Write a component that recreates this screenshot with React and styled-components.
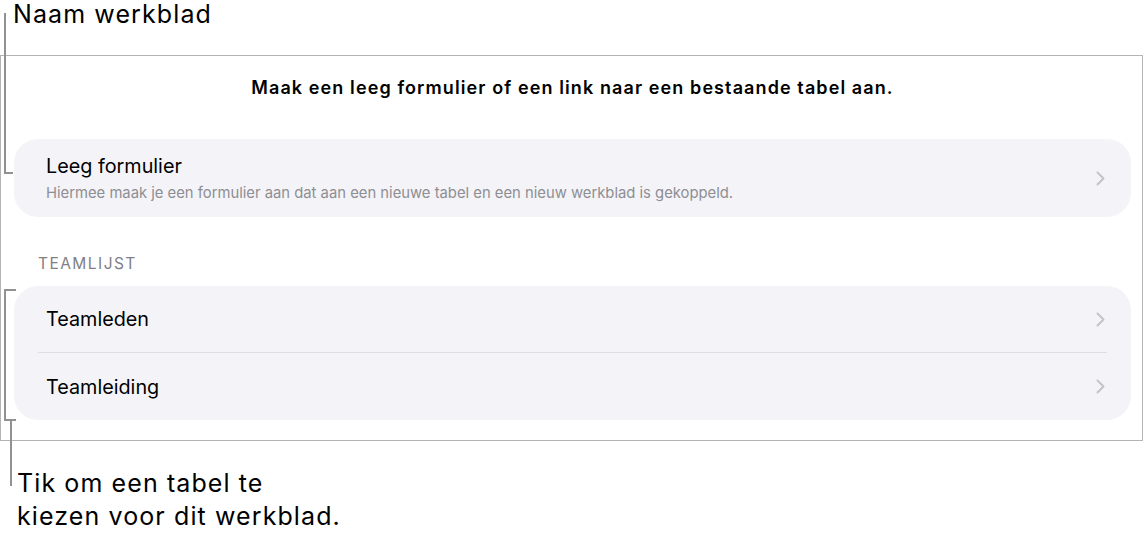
import React from 'react';
import styled, { createGlobalStyle } from 'styled-components';

const GlobalStyle = createGlobalStyle`
  html, body {
    margin: 0;
    padding: 0;
    background: #ffffff;
  }
  body {
    font-family: Inter, "Noto Sans", "Liberation Sans", sans-serif;
    color: #000000;
    -webkit-font-smoothing: antialiased;
  }
`;

const Page = styled.div`
  position: relative;
  width: 1144px;
  height: 537px;
  overflow: hidden;
`;

const CalloutText = styled.div`
  font-size: 25px;
  line-height: ${(p) => p.$lh}px;
  letter-spacing: 1.1px;
  color: #000;
  padding-left: ${(p) => p.$indent}px;
  padding-top: ${(p) => p.$top}px;
  height: ${(p) => p.$height}px;
  box-sizing: border-box;
`;

const Frame = styled.section`
  box-sizing: border-box;
  width: 1143px;
  border: 1px solid #b4b4b4;
  padding: 0 11px 20px 13px;
`;

const Heading = styled.h1`
  margin: 0;
  height: 83px;
  padding-top: 21px;
  box-sizing: border-box;
  text-align: center;
  font-size: 18px;
  line-height: 22px;
  font-weight: 600;
  letter-spacing: 1.1px;
`;

const Card = styled.div`
  background: #f4f4f8;
  border-radius: 24px;
  overflow: hidden;
`;

const Row = styled.div`
  display: flex;
  align-items: center;
  height: ${(p) => p.$height}px;
  padding: 0 26px 0 32px;
  box-sizing: border-box;
`;

const RowText = styled.div`
  flex: 1;
  display: flex;
  flex-direction: column;
  gap: 6px;
`;

const Title = styled.span`
  font-size: 19.8px;
  line-height: 24px;
  color: #000;
`;

const Subtitle = styled.span`
  font-size: 14.8px;
  line-height: 18px;
  color: #8e8e93;
`;

const Divider = styled.div`
  height: 1px;
  margin: 0 24px 0 24px;
  background: #dedee2;
`;

const SectionLabel = styled.div`
  height: 69px;
  box-sizing: border-box;
  padding: 38px 0 0 24px;
  font-size: 15.5px;
  line-height: 18px;
  color: #808085;
  text-transform: uppercase;
  letter-spacing: 1.45px;
`;

const Line = styled.div`
  position: absolute;
  background: #919191;
  left: ${(p) => p.$x}px;
  top: ${(p) => p.$y}px;
  width: ${(p) => p.$w}px;
  height: ${(p) => p.$h}px;
`;

const Chevron = () => (
  <svg width="9" height="15" viewBox="0 0 9 15" fill="none">
    <path
      d="M1.5 1.5L7.5 7.5L1.5 13.5"
      stroke="#c4c4c7"
      strokeWidth="2"
      strokeLinecap="round"
      strokeLinejoin="round"
    />
  </svg>
);

export default function App() {
  return (
    <>
      <GlobalStyle />
      <Page>
        <CalloutText $indent={13} $height={55} $top={0} $lh={28}>
          Naam werkblad
        </CalloutText>

        <Frame>
          <Heading>
            Maak een leeg formulier of een link naar een bestaande tabel aan.
          </Heading>

          <Card>
            <Row $height={78}>
              <RowText>
                <Title>Leeg formulier</Title>
                <Subtitle>
                  Hiermee maak je een formulier aan dat aan een nieuwe tabel en
                  een nieuw werkblad is gekoppeld.
                </Subtitle>
              </RowText>
              <Chevron />
            </Row>
          </Card>

          <SectionLabel>Teamlijst</SectionLabel>

          <Card>
            <Row $height={66}>
              <RowText>
                <Title>Teamleden</Title>
              </RowText>
              <Chevron />
            </Row>
            <Divider />
            <Row $height={67}>
              <RowText>
                <Title>Teamleiding</Title>
              </RowText>
              <Chevron />
            </Row>
          </Card>
        </Frame>

        <CalloutText $indent={17} $height={96} $top={26} $lh={33}>
          Tik om een tabel te
          <br />
          kiezen voor dit werkblad.
        </CalloutText>

        {/* lijn naar werkbladnaam */}
        <Line $x={4} $y={13} $w={2} $h={161} />
        <Line $x={4} $y={172} $w={9} $h={2} />

        {/* haak rond de teamlijst */}
        <Line $x={4} $y={289} $w={2} $h={132} />
        <Line $x={4} $y={289} $w={12} $h={2} />
        <Line $x={4} $y={419} $w={12} $h={2} />
        <Line $x={10} $y={419} $w={2} $h={67} />
      </Page>
    </>
  );
}
